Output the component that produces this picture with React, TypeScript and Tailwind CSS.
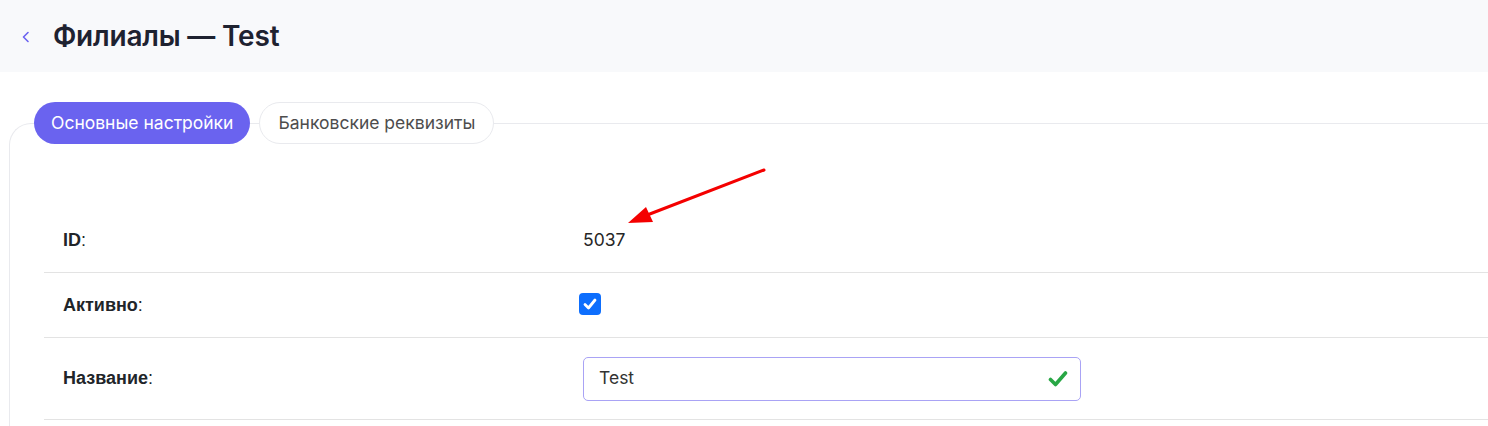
const rowLabel = "w-[520px] shrink-0 pl-[19px] font-['Liberation_Sans',Arial,sans-serif] text-[18px] text-[#212529]";

const App = () => {
  return (
    <div className="relative w-[1488px] h-[426px] overflow-hidden bg-white font-['Inter',sans-serif]">
      <div className="h-[72px] bg-[#f8f9fb] flex items-center pl-[20px]">
        <svg width="12" height="14" viewBox="0 0 12 14" className="mt-[1px]">
          <path d="M8 2.5 L3.5 7 L8 11.5" fill="none" stroke="#6b63f0" strokeWidth="1.6" strokeLinecap="round" strokeLinejoin="round" />
        </svg>
        <h1 className="ml-[21px] text-[28px] font-semibold text-[#1e2230] tracking-[-0.2px]">
          Филиалы — Test
        </h1>
      </div>

      <div className="pl-[9px] pt-[51px]">
        <div className="border-l border-t border-[#e9eaee] rounded-tl-[22px] h-[400px]">
          <div className="-mt-[22px] ml-[24px] flex gap-[9px]">
            <div className="h-[42px] px-[17px] rounded-full bg-[#6a63ef] text-white text-[17.5px] flex items-center">
              Основные настройки
            </div>
            <div className="h-[42px] px-[18px] rounded-full bg-white border border-[#e9eaee] text-[#4d4d4d] text-[17.5px] flex items-center">
              Банковские реквизиты
            </div>
          </div>

          <div className="ml-[34px] mt-[64px]">
            <div className="h-[65px] flex items-center border-b border-[#e3e3e3] pt-[1px]">
              <div className={rowLabel}>
                <b>ID</b>:
              </div>
              <div className="text-[17.5px] text-[#262626] pl-[19px]">5037</div>
            </div>
            <div className="h-[65px] flex items-center border-b border-[#e3e3e3]">
              <div className={rowLabel}>
                <b>Активно</b>:
              </div>
              <div className="pl-[15px] pb-[3px]">
                <div className="w-[22px] h-[22px] rounded-[4px] bg-[#0d6efd] flex items-center justify-center">
                  <svg width="16" height="16" viewBox="0 0 16 16">
                    <path d="M3 8.5 L6.5 12 L13 4" fill="none" stroke="white" strokeWidth="2.8" strokeLinecap="round" strokeLinejoin="round" />
                  </svg>
                </div>
              </div>
            </div>
            <div className="h-[82px] flex items-center border-b border-[#e3e3e3]">
              <div className={rowLabel}>
                <b>Название</b>:
              </div>
              <div className="ml-[19px] w-[498px] h-[44px] rounded-[5px] border border-[#a9a3f5] flex items-center justify-between pl-[15px] pr-[12px]">
                <span className="text-[17.5px] text-[#333]">Test</span>
                <svg width="20" height="18" viewBox="0 0 20 18">
                  <path d="M2.5 9.5 L7.5 14.5 L17.5 3" fill="none" stroke="#28a745" strokeWidth="3.6" strokeLinecap="round" strokeLinejoin="round" />
                </svg>
              </div>
            </div>
          </div>
        </div>
      </div>

      <svg className="absolute left-[620px] top-[162px]" width="160" height="70" viewBox="0 0 160 70">
        <line x1="144" y1="8" x2="22" y2="55" stroke="#f40000" strokeWidth="3" strokeLinecap="round" />
        <polygon points="8,61 26,45 33,60" fill="#f40000" />
      </svg>
    </div>
  );
};

export default App;
